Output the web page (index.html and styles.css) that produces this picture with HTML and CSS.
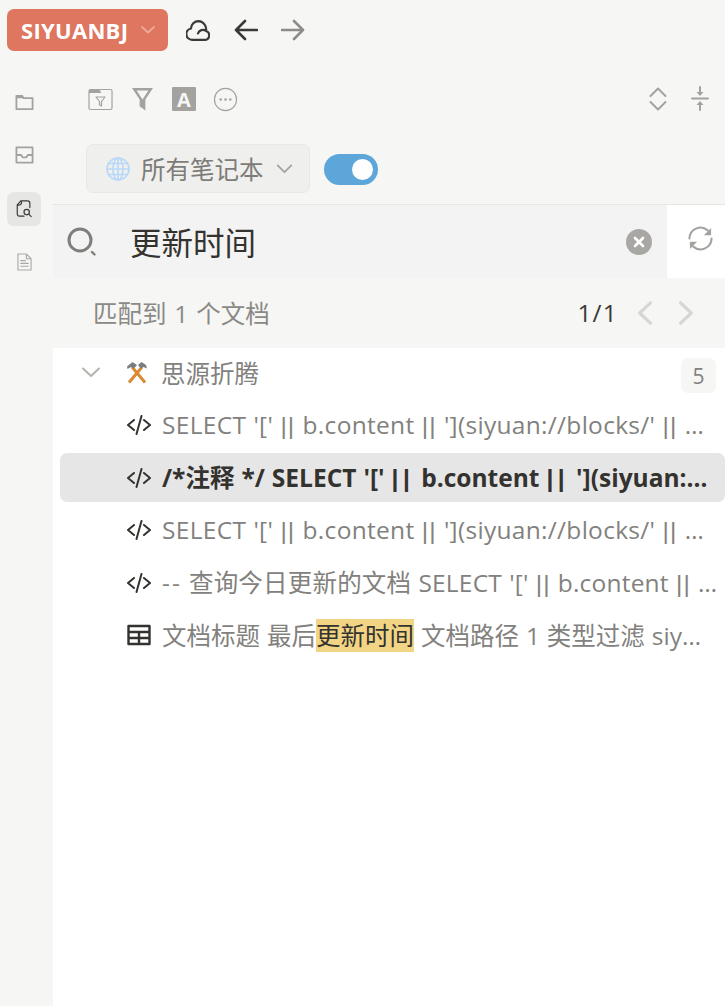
FILE: index.html
```html
<!DOCTYPE html>
<html lang="zh">
<head>
<meta charset="utf-8">
<title>搜索</title>
<link rel="stylesheet" href="styles.css">
</head>
<body>
<div class="app">
  <header class="topbar">
    <div class="workspace"><span class="workspace-name">SIYUANBJ</span>
      <svg class="ws-caret" viewBox="0 0 14 8"><path d="M1 1l6 5.500L13 1"/></svg>
    </div>
    <svg class="top-icon cloud" viewBox="0 0 24 21"><path d="M6 19.800h12.500a4.500 4.500 0 0 0 1.500-8.800A8.200 8.200 0 0 0 12.500 1.200 7.500 7.500 0 0 0 5 8.500a5.700 5.700 0 0 0 1 11.300zM12 13.500a5 5 0 0 1 8-2.500"/></svg>
    <svg class="top-icon back" viewBox="0 0 24 22"><path d="M23 11H2M11 2l-9 9 9 9"/></svg>
    <svg class="top-icon forward" viewBox="0 0 24 22"><path d="M1 11h21M13 2l9 9-9 9"/></svg>
  </header>
  <div class="body">
    <nav class="dock">
      <div class="dock-item"><svg viewBox="0 0 20 18"><path d="M1.500 2.500h6l1.500 2.500h9.500v11.500h-17z"/><path class="fill" d="M1 1.500h6.500L9.500 5H1z"/></svg></div>
      <div class="dock-item"><svg viewBox="0 0 20 18"><path d="M1.500 1h17v16h-17zM1.500 9h5l1.500 2.500h4L13.500 9h5"/></svg></div>
      <div class="dock-item active"><svg viewBox="0 0 20 20"><path d="M10 18.500H5a2.500 2.500 0 0 1-2.500-2.500V6l4-4.500H14A2.500 2.500 0 0 1 16.500 4v5M6.500 1.500c1.500 3 .5 5-4 5"/><circle cx="13" cy="14" r="3"/><path d="M15.500 16.500l2.500 2.500"/></svg></div>
      <div class="dock-item doc"><svg viewBox="0 0 16 19"><path d="M1 1h9l5 5v12H1zM10 1v5h5M4 8h5M4 11h8M4 14h8"/></svg></div>
    </nav>
    <main class="panel">
      <div class="toolbar">
        <svg class="tool folder" viewBox="0 0 25 23"><path d="M1 20V3a1.500 1.500 0 0 1 1.500-1.500h20A1.500 1.500 0 0 1 24 3v17a1.500 1.500 0 0 1-1.500 1.500h-20A1.500 1.500 0 0 1 1 20z"/><path class="fill" d="M1 3a2 2 0 0 1 2-2h8l2.500 4H1z"/><path d="M8 9h9l-3.500 4.500V18l-2-1v-3.500z"/></svg>
        <svg class="tool funnel" viewBox="0 0 22 25"><path class="solid" d="M0 1h22l-8 12v11.500l-6-4.500v-7zM4.800 3.500L11 13l6.200-9.500z" fill-rule="evenodd"/></svg>
        <div class="font-tool">A</div>
        <svg class="tool more" viewBox="0 0 26 26"><circle cx="13" cy="13" r="11.500"/><circle class="dot" cx="8" cy="13" r="1.300"/><circle class="dot" cx="13" cy="13" r="1.300"/><circle class="dot" cx="18" cy="13" r="1.300"/></svg>
        <span class="spacer"></span>
        <svg class="tool expand" viewBox="0 0 18 26"><path d="M1.500 10L9 2.500l7.500 7.500M1.500 16L9 23.500l7.500-7.500"/></svg>
        <svg class="tool collapse" viewBox="0 0 18 26"><path d="M1 12.500h16M9 1v6M9 24v-6"/><path class="solid" d="M5.500 6h7L9 10zM5.500 19h7L9 15z"/></svg>
      </div>
      <div class="scope-row">
        <div class="scope">
          <svg class="globe" viewBox="0 0 24 24"><circle cx="12" cy="12" r="11"/><ellipse cx="12" cy="12" rx="5" ry="11"/><path d="M12 1v22M1 12h22M2.500 6.500h19M2.500 17.500h19"/></svg>
          <span class="scope-label">所有笔记本</span>
          <svg class="scope-caret" viewBox="0 0 18 11"><path d="M1.500 1.500L9 9l7.500-7.500"/></svg>
        </div>
        <div class="switch"><span class="knob"></span></div>
      </div>
      <div class="search-row">
        <div class="search-box">
          <svg class="search-icon" viewBox="0 0 30 30"><circle cx="13" cy="13" r="11"/><path class="handle" d="M25 25l2.500 2.500"/></svg>
          <span class="query">更新时间</span>
          <span class="clear"><svg viewBox="0 0 12 12"><path d="M2 2l8 8M10 2l-8 8"/></svg></span>
        </div>
        <div class="refresh"><svg viewBox="0 0 26 26"><path d="M1.500 13A11.500 11.500 0 0 1 20.500 4.500M24.500 13A11.500 11.500 0 0 1 5.500 21.500"/><path class="solid" d="M24 2v7.500h-7.500zM2 24v-7.500h7.500z"/></svg></div>
      </div>
      <div class="result-bar">
        <span class="result-count">匹配到 1 个文档</span>
        <span class="pager">1/1</span>
        <svg class="page-arrow" viewBox="0 0 14 22"><path d="M12.500 1.500L2.500 11l10 9.500"/></svg>
        <svg class="page-arrow" viewBox="0 0 14 22"><path d="M1.500 1.500l10 9.500-10 9.500"/></svg>
      </div>
      <section class="results">
        <div class="row group">
          <svg class="row-caret" viewBox="0 0 18 11"><path d="M1 1.500L9 9l8-7.500"/></svg>
          <svg class="emoji" viewBox="0 0 22 23"><path class="haft" d="M3 21.500L16 6M19 21.500L6 6"/><path class="head" d="M1 5.500L6.500 1l4.500 3-3 3.500-3-1.500-3.500 2zM21 7.500L20 4l-4.500-3-3.500 3 3 3.500 2.500-1.500z"/></svg>
          <span class="row-text">思源折腾</span>
          <span class="badge">5</span>
        </div>
        <div class="row item">
          <svg class="code" viewBox="0 0 24 20"><path d="M7 5l-6 5 6 5M17 5l6 5-6 5M14.500 1l-5 18"/></svg>
          <span class="row-text latin">SELECT '[' <span class="op">||</span> b.content <span class="op">||</span> '](siyuan://blocks/' <span class="op">||</span> …</span>
        </div>
        <div class="row item selected">
          <svg class="code" viewBox="0 0 24 20"><path d="M7 5l-6 5 6 5M17 5l6 5-6 5M14.500 1l-5 18"/></svg>
          <span class="row-text">/*注释 */ SELECT '[' <span class="op">||</span> b.content <span class="op">||</span> '](siyuan:…</span>
        </div>
        <div class="row item">
          <svg class="code" viewBox="0 0 24 20"><path d="M7 5l-6 5 6 5M17 5l6 5-6 5M14.500 1l-5 18"/></svg>
          <span class="row-text latin">SELECT '[' <span class="op">||</span> b.content <span class="op">||</span> '](siyuan://blocks/' <span class="op">||</span> …</span>
        </div>
        <div class="row item">
          <svg class="code" viewBox="0 0 24 20"><path d="M7 5l-6 5 6 5M17 5l6 5-6 5M14.500 1l-5 18"/></svg>
          <span class="row-text mixed"><span class="dash">--</span> 查询今日更新的文档 SELECT '[' <span class="op">||</span> b.content <span class="op">||</span> …</span>
        </div>
        <div class="row item">
          <svg class="table" viewBox="0 0 24 22"><path d="M1.500 2h21v18h-21zM1.500 8h21M1.500 14h21M12 8v12"/></svg>
          <span class="row-text">文档标题 最后<mark class="hit">更新时间</mark> 文档路径 1 类型过滤 siy…</span>
        </div>
      </section>
    </main>
  </div>
</div>
</body>
</html>
```
FILE: styles.css
```css
* { box-sizing: border-box; }
html, body { margin: 0; height: 100%; }
body {
  background: #f6f6f4;
  color: #3a3936;
  font-family: "Open Sans", "Noto Sans CJK SC", sans-serif;
  overflow: hidden;
}
svg { display: block; fill: none; stroke-linecap: round; stroke-linejoin: round; flex: none; }
.app { display: flex; flex-direction: column; height: 1006px; }

.topbar { display: flex; align-items: center; height: 60px; padding: 0 0 0 7px; }
.workspace {
  display: flex; align-items: center; width: 161px; height: 42px; padding-left: 14px;
  background: #de7660; border-radius: 7px; color: #fff;
}
.workspace-name { font-size: 22px; font-weight: 700; letter-spacing: 0.3px; }
.ws-caret { width: 14px; height: 8px; margin-left: 13px; stroke: #eda99a; stroke-width: 1.8; }
.top-icon { stroke-width: 2.2; }
.cloud { width: 24px; height: 21px; margin-left: 18px; stroke: #3a3936; }
.back { width: 24px; height: 22px; margin-left: 24px; stroke: #3a3936; stroke-width: 2.6; }
.forward { width: 24px; height: 22px; margin-left: 23px; stroke: #8e8c88; stroke-width: 2.6; }

.body { display: flex; flex: 1; min-height: 0; }
.dock { display: flex; flex-direction: column; align-items: flex-start; width: 53px; padding: 25px 0 0 7px; gap: 20px; flex: none; }
.dock-item { display: flex; align-items: center; justify-content: center; width: 34px; height: 33.500px; border-radius: 7px; }
.dock-item svg { width: 19px; height: 18px; stroke: #a3a29e; stroke-width: 1.9; }
.dock-item .fill { fill: #a3a29e; stroke: none; }
.dock-item.active { background: #e6e6e4; }
.dock-item.active svg { width: 18px; height: 19px; stroke: #3a3936; stroke-width: 1.3; }
.dock-item.doc svg { width: 15px; height: 18px; stroke: #aaa9a5; stroke-width: 1.2; }

.panel { display: flex; flex-direction: column; flex: 1; min-width: 0; }
.toolbar { display: flex; align-items: center; height: 42px; margin-top: 18px; padding: 0 16px 0 35px; }
.tool { stroke: #a3a29e; stroke-width: 1.2; }
.tool .fill, .tool .solid, .tool .dot { fill: #a3a29e; stroke: none; }
.folder { width: 25px; height: 23px; }
.funnel { width: 21px; height: 24px; margin-left: 19px; }
.font-tool {
  display: flex; align-items: center; justify-content: center; width: 24px; height: 24px; margin-left: 19px;
  background: #a3a29e; color: #f6f6f4; font-size: 20px; font-weight: 700; border-radius: 1px;
}
.more { width: 25px; height: 25px; margin-left: 17px; }
.spacer { flex: 1; }
.expand { width: 18px; height: 26px; stroke-width: 2; }
.collapse { width: 18px; height: 26px; margin-left: 24px; stroke-width: 2; }

.scope-row { display: flex; align-items: center; height: 49px; margin-top: 24px; padding-left: 33px; }
.scope {
  display: flex; align-items: center; width: 224px; height: 49px; padding-left: 19px;
  background: #efefed; border: 1px solid #e8e8e6; border-radius: 7px;
}
.globe { width: 24px; height: 24px; stroke: #b8d8f8; stroke-width: 1.6; }
.scope-label { margin-left: 11px; font-size: 24.500px; color: #7d7c78; }
.scope-caret { width: 17px; height: 10px; margin-left: 12px; stroke: #a3a29e; stroke-width: 2; }
.switch { position: relative; width: 54px; height: 31px; margin: 2px 0 0 14px; background: #5ca6d9; border-radius: 16px; }
.knob { position: absolute; top: 5px; right: 5px; width: 21px; height: 21px; background: #fff; border-radius: 50%; }

.search-row { display: flex; height: 74px; margin-top: 11px; border-top: 1px solid #e6e6e4; }
.search-box { display: flex; align-items: center; flex: 1; padding: 0 15px 0 14px; background: #f3f3f3; }
.search-icon { width: 30px; height: 30px; stroke: #7f7e7a; stroke-width: 3; }
.search-icon .handle { stroke-width: 2.400; }
.query { flex: 1; margin-left: 33px; padding-bottom: 2px; font-size: 31.500px; color: #33322f; }
.clear { display: flex; align-items: center; justify-content: center; width: 26px; height: 26px; background: #a8a7a3; border-radius: 50%; }
.clear svg { width: 12px; height: 12px; stroke: #fff; stroke-width: 2.6; }
.refresh { display: flex; align-items: center; width: 58px; padding: 0 0 6px 21px; background: #fff; }
.refresh svg { width: 25px; height: 25px; stroke: #a3a29e; stroke-width: 2.2; }
.refresh .solid { fill: #a3a29e; stroke: none; }

.result-bar { display: flex; align-items: center; height: 70px; padding: 0 31px 0 40px; }
.result-count { flex: 1; padding-bottom: 2px; font-size: 24.500px; color: #8a8985; word-spacing: 1.500px; }
.pager { padding-bottom: 2px; font-size: 24.500px; color: #3a3936; letter-spacing: 1.200px; }
.page-arrow { width: 15px; height: 24px; margin-left: 19px; stroke: #d6d6d3; stroke-width: 3; }
.page-arrow:last-child { margin-left: 27px; }

.results { flex: 1; background: #fff; }
.row { display: flex; align-items: center; height: 49px; margin-bottom: 3.500px; margin-left: 7px; padding-left: 67px; border-radius: 7px; font-size: 24.500px; color: #82817d; }
.group { padding-left: 22px; padding-right: 9px; }
.row-caret { width: 18px; height: 11px; margin-right: 26px; stroke: #b4b3af; stroke-width: 2; }
.emoji { width: 22px; height: 23px; margin-right: 13px; }
.haft { stroke: #d98a34; stroke-width: 3; stroke-linecap: butt; }
.head { fill: #7b7d80; stroke: none; }
.row-text { flex: 1; min-width: 0; white-space: nowrap; word-spacing: 0.600px; }
.item .row-text { padding-bottom: 2px; }
.latin { letter-spacing: 0.300px; }
.mixed { letter-spacing: 0.200px; }
.op { font-family: "Liberation Sans", sans-serif; letter-spacing: 1.100px; }
.selected .op { letter-spacing: 4.500px; }
.dash { letter-spacing: 2px; }
.badge { display: flex; align-items: center; justify-content: center; width: 35px; height: 35px; margin-top: 6px; background: #f6f6f4; border-radius: 7px; font-size: 21px; flex: none; color: #82817d; }
.code { width: 24px; height: 20px; margin-right: 11px; stroke: #33322f; stroke-width: 2; }
.table { width: 24px; height: 22px; margin-right: 11px; stroke: #33322f; stroke-width: 2.4; stroke-linecap: butt; }
.selected { background: #e6e6e6; color: #33322f; font-weight: 700; }
.hit { background: #f2d485; color: #33322f; }
```
